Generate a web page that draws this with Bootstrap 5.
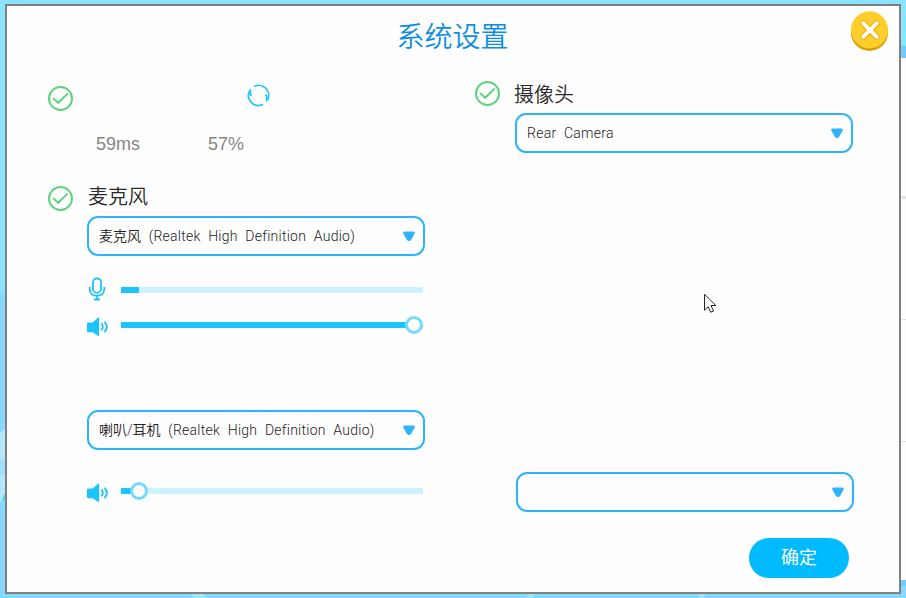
<!DOCTYPE html>
<html lang="zh-CN">
<head>
<meta charset="utf-8">
<meta name="viewport" content="width=device-width, initial-scale=1">
<title>系统设置</title>
<link href="https://cdn.jsdelivr.net/npm/bootstrap@5.3.0/dist/css/bootstrap.min.css" rel="stylesheet">
<style>
  body { width: 906px; height: 598px; overflow: hidden; background: #8ae2ff; color: #333; font-family: "Liberation Sans", "Noto Sans CJK SC", sans-serif; }
  .scene { z-index: 0; }
  .dialog-box { width: 896px; height: 590px; margin: 4px 0 0 5px; border: 2px solid #808080; background: #fefefe; z-index: 1; }
  .dialog-head { height: 75px; padding-top: 11px; }
  .dialog-title { font-size: 28px; line-height: 42px; color: #0f8fdd; font-weight: 350; padding-right: 1px; }
  .btn-dismiss { top: 5px; right: 10px; width: 39px; height: 41px; line-height: 0; }
  .dialog-cols { display: grid; grid-template-columns: 377px 379px; column-gap: 50px; padding-left: 41px; }
  .check-ring { width: 25px; height: 25px; flex: none; }
  .group-label { font-size: 20px; line-height: 24px; font-weight: 350; color: #2a2a2a; margin-left: 15px; }
  .net-row { padding-top: 3px; height: 51px; }
  .net-row .check-ring { margin-top: 2px; }
  .net-row .refresh { width: 23px; height: 23px; margin-left: 174px; }
  .stat-row { height: 54px; padding-left: 48px; font-size: 18px; line-height: 24px; color: #858585; }
  .stat-row span { width: 112px; }
  .mic-head { height: 30px; }
  .mic-head .group-label { margin-top: -1px; }
  .cam-head { height: 32px; }
  .cam-head .group-label { margin-top: 2px; margin-left: 14px; }
  .indent { margin-left: 39px; }
  .picker { height: 40px; width: 338px; border: 2px solid #2db4ff; border-radius: 11px; padding: 0 8px 0 10px; font-family: Roboto, "Noto Sans CJK SC", sans-serif; font-size: 14px; letter-spacing: .25px; word-spacing: 4px; color: #222; background: #fefefe; font-weight: 300; }
  .picker .cjk { font-weight: 350; letter-spacing: 0; }
  .level-row { width: 338px; height: 36px; }
  .level-row .glyph { width: 34px; flex: none; line-height: 0; }
  .track { width: 302px; height: 6px; background: #ccf2ff; }
  .fill { height: 6px; background: #1cc4ff; }
  .knob { width: 18px; height: 18px; flex: none; margin-left: -9px; border: 3px solid #75d9ff; border-radius: 50%; background: #fefefe; }
  .mic-level { margin-top: 16px; }
  .mic-level .glyph { padding-bottom: 3px; }
  .mic-gain { margin-top: -1px; }
  .mic-gain .glyph, .out-gain .glyph { padding-top: 3px; }
  .out-picker { margin-top: 67px; }
  .out-gain { margin-top: 23px; }
  .cam-picker { margin-left: 40px; }
  .extra-picker { margin: 319px 0 0 41px; }
  .btn-ok { width: 100px; height: 40px; margin: 26px 0 0 274px; background: #00bbff; color: #fff; font-size: 18px; line-height: 38px; padding: 0; border: 0; }
  .btn-ok:hover { background: #00aeee; color: #fff; }
  .pointer { left: 704px; top: 293px; z-index: 5; line-height: 0; }
</style>
<script src="https://cdn.jsdelivr.net/npm/bootstrap@5.3.0/dist/js/bootstrap.bundle.min.js"></script>
</head>
<body>
<svg class="scene position-absolute top-0 start-0" width="906" height="598" aria-hidden="true">
  <rect width="906" height="598" fill="#8ae3ff"/>
  <path d="M0 292h6v302h895v-8h5v12H0z" fill="#87d9ff"/>
  <path d="M0 433l6-5v31l-6 1z" fill="#b5e7ff"/>
  <path d="M0 460l6-1v16H0z" fill="#9fe0ff"/>
  <path d="M0 475h6v17L0 503z" fill="#b5e7ff"/>
  <path d="M5 493v7H2z" fill="#5ccfff"/>
  <path d="M191 594h11l6 4h-14zM529 594h6l-3 4h-6zM699 594h5l1 4h-7z" fill="#a5e3ff"/>
  <rect x="900" y="46" width="6" height="12" fill="#70cbff"/>
  <rect x="900" y="58" width="6" height="522" fill="#fefefe"/>
  <rect x="900" y="196" width="6" height="3" fill="#e3e3e3"/>
  <path d="M900 319h6v1h-6zM900 441h6v1h-6z" fill="#e0e0e0"/>
  <rect x="900" y="580" width="6" height="6" fill="#75ccff"/>
</svg>

<svg width="0" height="0" class="position-absolute" aria-hidden="true">
  <symbol id="check" viewBox="0 0 25 25"><circle cx="12.5" cy="12.5" r="11.500" fill="none" stroke="#5dd37c" stroke-width="2"/><path d="M5.800 12.600l4.300 4.200 9-8.700" fill="none" stroke="#5dd37c" stroke-width="2" stroke-linecap="round"/></symbol>
  <symbol id="speaker" viewBox="0 0 22 20"><path d="M1 5.500h4.500L11.300 .6h.8v18.400h-.8L5.500 15.200H1L0 14.300V6.500z" fill="#1cc4ff"/><path d="M14.300 6.300q2.900 3.500 0 7M17.400 4.600q5 5 0 10.500" fill="none" stroke="#1cc4ff" stroke-width="1.800"/></symbol>
  <symbol id="caret" viewBox="0 0 12 11"><path d="M1.300 .5h9.400q1.500 .3 1 2L8.200 8.800q-2.200 2.700-4.400 0L.3 2.500q-.5-1.700 1-2z" fill="#2db4ff"/></symbol>
</svg>

<main class="dialog-box position-relative">
  <header class="dialog-head text-center">
    <h1 class="dialog-title m-0">系统设置</h1>
    <button type="button" class="btn-dismiss btn p-0 border-0 position-absolute" aria-label="关闭">
      <svg width="39" height="41" viewBox="0 0 39 41"><circle cx="19.500" cy="21.300" r="18.600" fill="#d2a505"/><circle cx="19.500" cy="18.800" r="18.500" fill="#ffce2a"/><g stroke-linecap="round"><path d="M13.500 12.800l13 13m0-13l-13 13" stroke="#f3b30d" stroke-width="6.500"/><path d="M13.200 12.200l13.600 13.600m0-13.600l-13.600 13.600" stroke="#fff" stroke-width="3.800"/></g></svg>
    </button>
  </header>

  <div class="dialog-cols">
    <section>
      <div class="net-row d-flex align-items-start">
        <svg class="check-ring"><use href="#check"/></svg>
        <svg class="refresh" viewBox="0 0 23 23" fill="none" stroke="#1cc4ff" stroke-width="1.600"><path d="M7 2.600A9.900 9.900 0 0 1 20.600 15.800M16 20.200A9.900 9.900 0 0 1 2.400 7.200"/><path d="M3.300 5v5.500l1.200 1.400M19.700 17.500v-5.500l-1.200-1.400" stroke-width="1.800"/></svg>
      </div>
      <div class="stat-row d-flex"><span>59ms</span><span>57%</span></div>
      <div class="mic-head d-flex align-items-start">
        <svg class="check-ring"><use href="#check"/></svg>
        <span class="group-label">麦克风</span>
      </div>
      <div class="indent">
        <div class="picker d-flex align-items-center justify-content-between"><span><span class="cjk">麦克风</span> (Realtek High Definition Audio)</span><svg width="12" height="11"><use href="#caret"/></svg></div>
        <div class="level-row mic-level d-flex align-items-center">
          <span class="glyph"><svg width="20" height="24" viewBox="0 0 20 24" fill="none" stroke="#1cc4ff" stroke-width="1.800"><rect x="5.900" y="1.500" width="8.200" height="14.300" rx="4.100"/><path d="M2.700 10v2.200q.3 6.300 7.300 6.500 7-.2 7.300-6.500V10M10 18.700v3.500M7 22.500h6"/></svg></span>
          <div class="track"><div class="fill" style="width:18px"></div></div>
        </div>
        <div class="level-row mic-gain d-flex align-items-center">
          <span class="glyph"><svg width="22" height="20"><use href="#speaker"/></svg></span>
          <div class="track d-flex align-items-center"><div class="fill" style="width:293px"></div><div class="knob"></div></div>
        </div>
        <div class="picker out-picker d-flex align-items-center justify-content-between"><span><span class="cjk">喇叭/耳机</span> (Realtek High Definition Audio)</span><svg width="12" height="11"><use href="#caret"/></svg></div>
        <div class="level-row out-gain d-flex align-items-center">
          <span class="glyph"><svg width="22" height="20"><use href="#speaker"/></svg></span>
          <div class="track d-flex align-items-center"><div class="fill" style="width:18px"></div><div class="knob"></div></div>
        </div>
      </div>
    </section>

    <section class="d-flex flex-column">
      <div class="cam-head d-flex align-items-start">
        <svg class="check-ring"><use href="#check"/></svg>
        <span class="group-label">摄像头</span>
      </div>
      <div class="picker cam-picker d-flex align-items-center justify-content-between"><span>Rear Camera</span><svg width="12" height="11"><use href="#caret"/></svg></div>
      <div class="picker extra-picker d-flex align-items-center justify-content-between"><span></span><svg width="12" height="11"><use href="#caret"/></svg></div>
      <button type="button" class="btn btn-ok rounded-pill">确定</button>
    </section>
  </div>
</main>
<svg class="pointer position-absolute" width="13" height="21" viewBox="0 0 13 21" aria-hidden="true"><path d="M.5 1.200v16l3.600-3.400 2.600 5.400 2.800-1.100-2.500-5.600h4.800z" fill="#fff" stroke="#223" stroke-width="1"/></svg>
</body>
</html>
